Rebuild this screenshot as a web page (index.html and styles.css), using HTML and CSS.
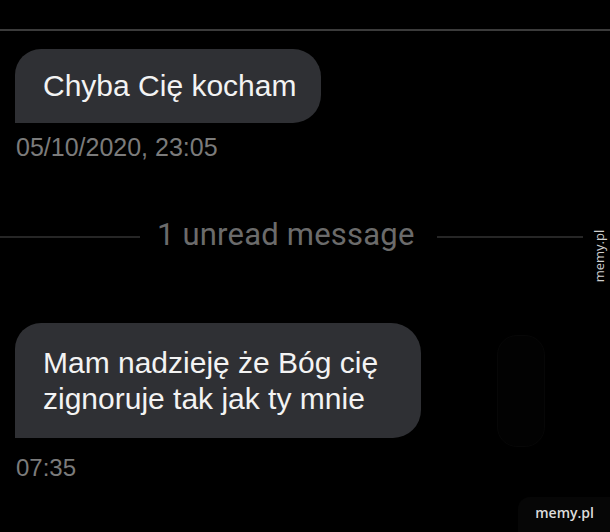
FILE: index.html
```html
<!DOCTYPE html>
<html lang="pl">
<head>
<meta charset="utf-8">
<title>Chat</title>
<link rel="stylesheet" href="styles.css">
</head>
<body>
<main class="chat">
  <div class="top-rule"></div>

  <div class="bubble bubble--first">Chyba Cię kocham</div>
  <div class="stamp stamp--first">05/10/2020, 23:05</div>

  <div class="divider">
    <span class="divider__line divider__line--left"></span>
    <span class="divider__text">1 unread message</span>
    <span class="divider__line divider__line--right"></span>
  </div>

  <div class="row">
    <div class="bubble bubble--second">Mam nadzieję że Bóg cię zignoruje tak jak ty mnie</div>
    <div class="ghost"></div>
  </div>
  <div class="stamp stamp--second">07:35</div>

  <div class="mark-side">memy.pl</div>
  <div class="mark-corner">memy.pl</div>
</main>
</body>
</html>
```

FILE: styles.css
```css
html, body {
  margin: 0;
  padding: 0;
  background: #000;
}

.chat {
  position: relative;
  width: 610px;
  height: 532px;
  overflow: hidden;
  background: #000;
  padding-top: 29px;
  box-sizing: border-box;
  font-family: "Liberation Sans", Arial, sans-serif;
}

.top-rule {
  height: 2px;
  background: #3b3b3b;
}

.bubble {
  background: #2f3034;
  color: #f3f3f3;
  font-size: 30px;
  line-height: 36px;
  margin-left: 15px;
  border-radius: 26px 28px 28px 0;
  box-sizing: border-box;
}

.bubble--first {
  width: fit-content;
  margin-top: 18px;
  padding: 19px 25px 19px 28px;
}

.bubble--second {
  width: 406px;
  padding: 22px 28px 21px 28px;
  border-radius: 26px 30px 28px 0;
}

.stamp {
  margin-left: 16px;
  color: #7b7b7b;
  font-size: 25px;
  line-height: 30px;
}

.stamp--first {
  margin-top: 9px;
}

.stamp--second {
  margin-top: 6px;
  font-size: 24px;
}

.divider {
  display: flex;
  align-items: center;
  margin-top: 55px;
  height: 36px;
}

.divider__line {
  height: 2px;
  margin-top: 4px;
  background: #262626;
  flex: none;
}

.divider__line--left {
  width: 140px;
}

.divider__line--right {
  width: 146px;
}

.divider__text {
  margin: 0 22px 0 17px;
  font-family: Roboto, "Liberation Sans", sans-serif;
  font-weight: 400;
  font-size: 31px;
  letter-spacing: 0.2px;
  line-height: 36px;
  color: #6b6b6b;
  white-space: nowrap;
}

.row {
  display: flex;
  align-items: flex-start;
  margin-top: 70px;
}

.ghost {
  width: 46px;
  height: 110px;
  margin: 12px 0 0 76px;
  border-radius: 20px;
  background: #020202;
  border: 1px solid #070707;
}

.mark-side {
  position: absolute;
  left: 571px;
  top: 248px;
  width: 56px;
  text-align: center;
  transform: rotate(-90deg);
  font-family: "Open Sans", sans-serif;
  font-size: 13px;
  line-height: 16px;
  color: #cfcfcf;
}

.mark-corner {
  position: absolute;
  right: 0;
  bottom: 0;
  width: 92px;
  height: 35px;
  box-sizing: border-box;
  padding: 7px 16px 0 0;
  text-align: right;
  border-top-left-radius: 12px;
  background: #060606;
  font-family: "Open Sans", sans-serif;
  font-weight: 600;
  font-size: 14px;
  line-height: 18px;
  color: #dcdcdc;
}
```
